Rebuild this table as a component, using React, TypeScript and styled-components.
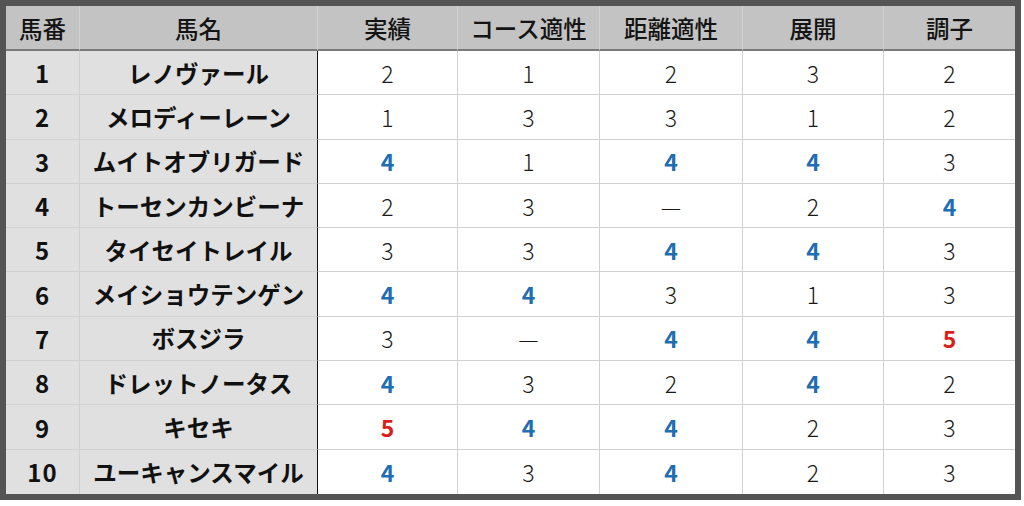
import React from 'react';
import styled, { createGlobalStyle } from 'styled-components';

const GlobalStyle = createGlobalStyle`
    html, body {
        margin: 0;
        padding: 0;
        background: #ffffff;
    }
    body {
        font-family: "Noto Sans CJK JP", "Noto Sans", sans-serif;
        color: #111;
    }
`;

const Frame = styled.div`
    width: 1021px;
    height: 500px;
    box-sizing: border-box;
    border: 6px solid #545454;
    background: #ffffff;
`;

const Grid = styled.div`
    height: 100%;
    display: grid;
    grid-template-columns: 74px 238px 140px 142px 143px 141px 1fr;
    grid-template-rows: 45px repeat(10, 1fr);
`;

const Cell = styled.div<{ $last?: boolean; $bottom?: boolean }>`
    box-sizing: border-box;
    display: flex;
    align-items: center;
    justify-content: center;
    border-right: ${(p) => (p.$last ? 'none' : '1px solid #d0d0d0')};
    border-bottom: ${(p) => (p.$bottom ? 'none' : '1px solid #d0d0d0')};
    white-space: nowrap;
`;

const HeadCell = styled(Cell)`
    background: #c3c3c3;
    border-bottom: 2px solid #7a7a7a;
    font-size: 23.5px;
    font-weight: 500;
    color: #141414;
`;

const NumCell = styled(Cell)`
    background: #e0e0e0;
    font-size: 24px;
    font-weight: 700;
    letter-spacing: 1px;
`;

const NameCell = styled(Cell)`
    background: #e0e0e0;
    border-right: 1px solid #111;
    font-size: 23.5px;
    font-weight: 700;
`;

const ScoreCell = styled(Cell)<{ $tone?: 'blue' | 'red' }>`
    font-size: 23px;
    font-weight: ${(p) => (p.$tone ? 700 : 300)};
    color: ${(p) =>
        p.$tone === 'blue' ? '#1f6db3' : p.$tone === 'red' ? '#da1f1a' : '#1a1a1a'};
`;

const headers = ['馬番', '馬名', '実績', 'コース適性', '距離適性', '展開', '調子'];

const horses: { no: number; name: string; scores: string[] }[] = [
    { no: 1, name: 'レノヴァール', scores: ['2', '1', '2', '3', '2'] },
    { no: 2, name: 'メロディーレーン', scores: ['1', '3', '3', '1', '2'] },
    { no: 3, name: 'ムイトオブリガード', scores: ['4', '1', '4', '4', '3'] },
    { no: 4, name: 'トーセンカンビーナ', scores: ['2', '3', '—', '2', '4'] },
    { no: 5, name: 'タイセイトレイル', scores: ['3', '3', '4', '4', '3'] },
    { no: 6, name: 'メイショウテンゲン', scores: ['4', '4', '3', '1', '3'] },
    { no: 7, name: 'ボスジラ', scores: ['3', '—', '4', '4', '5'] },
    { no: 8, name: 'ドレットノータス', scores: ['4', '3', '2', '4', '2'] },
    { no: 9, name: 'キセキ', scores: ['5', '4', '4', '2', '3'] },
    { no: 10, name: 'ユーキャンスマイル', scores: ['4', '3', '4', '2', '3'] },
];

const toneOf = (v: string) => (v === '4' ? 'blue' : v === '5' ? 'red' : undefined);

export default function App() {
    return (
        <>
            <GlobalStyle />
            <Frame>
                <Grid>
                    {headers.map((h, i) => (
                        <HeadCell key={h} $last={i === headers.length - 1}>
                            {h}
                        </HeadCell>
                    ))}
                    {horses.map((horse, r) => {
                        const bottom = r === horses.length - 1;
                        return (
                            <React.Fragment key={horse.no}>
                                <NumCell $bottom={bottom}>{horse.no}</NumCell>
                                <NameCell $bottom={bottom}>{horse.name}</NameCell>
                                {horse.scores.map((s, c) => (
                                    <ScoreCell
                                        key={c}
                                        $tone={toneOf(s)}
                                        $bottom={bottom}
                                        $last={c === horse.scores.length - 1}
                                    >
                                        {s}
                                    </ScoreCell>
                                ))}
                            </React.Fragment>
                        );
                    })}
                </Grid>
            </Frame>
        </>
    );
}
